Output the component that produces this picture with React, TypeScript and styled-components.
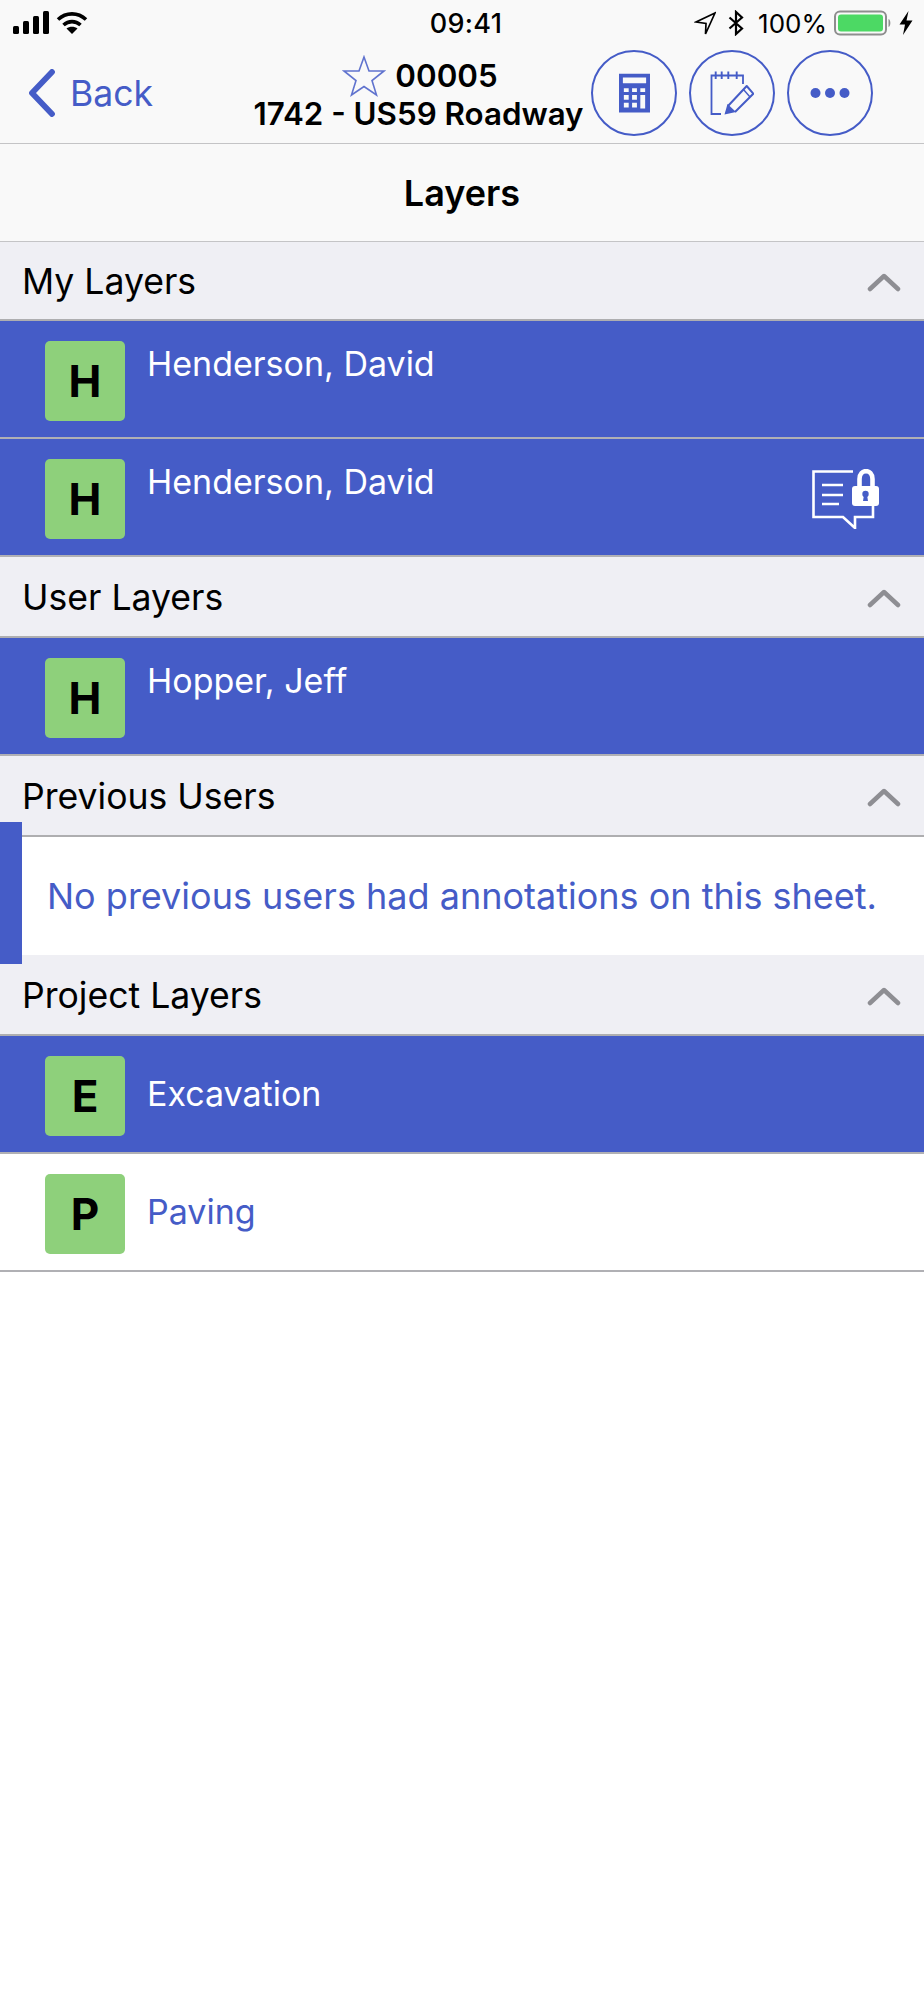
import React from 'react'
import styled, { createGlobalStyle } from 'styled-components'

const BLUE = '#455cc7'

const GlobalStyle = createGlobalStyle`
  html, body {
    margin: 0;
    padding: 0;
    background: #fff;
    font-family: Inter, "Noto Sans", "Liberation Sans", sans-serif;
  }
`

const Page = styled.div`
  position: relative;
  width: 924px;
  height: 2000px;
  background: #fff;
  overflow: hidden;
`

const TopBar = styled.header`
  height: 143px;
  background: #f9f9f9;
  border-bottom: 1px solid #c4c4c6;
  display: flex;
  flex-direction: column;
`

const StatusBar = styled.div`
  height: 46px;
  display: flex;
  align-items: center;
  justify-content: space-between;
  padding: 0 11px 0 13px;
  position: relative;
  font-size: 26px;
  color: #000;
`

const StatusGroup = styled.div`
  position: relative;
  display: flex;
  align-items: center;
  gap: 7px;
`

const StatusIcons = styled.div`
  display: flex;
  align-items: center;
  gap: 12px;
  margin-right: 7px;
`

const Clock = styled.div`
  position: absolute;
  left: 8px;
  right: 0;
  text-align: center;
  font-size: 27px;
  font-weight: 500;
  letter-spacing: 0.3px;
`

const NavRow = styled.div`
  flex: 1;
  display: flex;
  align-items: center;
  padding-bottom: 3px;
`

const BackLink = styled.div`
  width: 254px;
  padding-left: 29px;
  box-sizing: border-box;
  display: flex;
  align-items: center;
  gap: 15px;
  color: ${BLUE};
  font-size: 35.6px;
`

const NavTitle = styled.div`
  width: 329px;
  margin-bottom: -3px;
  display: flex;
  flex-direction: column;
  align-items: center;
  font-size: 31.3px;
  font-weight: 600;
  line-height: 38px;
  color: #000;
  white-space: nowrap;
`

const TitleTop = styled.div`
  height: 38px;
  display: flex;
  align-items: center;
  gap: 9px;
  margin-left: 3px;
`

const NavActions = styled.div`
  display: flex;
  gap: 12px;
  margin-left: 8px;
`

const CircleButton = styled.div`
  width: 86px;
  height: 86px;
  box-sizing: border-box;
  border: 2px solid ${BLUE};
  border-radius: 50%;
  display: flex;
  align-items: center;
  justify-content: center;
`

const TitleBar = styled.div`
  height: 97px;
  background: #f9f9f9;
  border-bottom: 1px solid #c4c4c6;
  display: flex;
  align-items: center;
  justify-content: center;
  font-size: 36px;
  font-weight: 600;
  color: #000;
`

const SectionHeader = styled.div<{ $first?: boolean }>`
  height: ${(p) => (p.$first ? '79px' : '81px')};
  box-sizing: border-box;
  background: #efeff4;
  border-bottom: 2px solid #aeaeb0;
  padding: 2px 23px 0 22px;
  display: flex;
  align-items: center;
  justify-content: space-between;
  font-size: 35.6px;
  color: #000;
`

const Row = styled.div<{ $selected?: boolean }>`
  height: 118px;
  box-sizing: border-box;
  border-bottom: 2px solid #b0b0b4;
  background: ${(p) => (p.$selected ? BLUE : '#fff')};
  color: ${(p) => (p.$selected ? '#fff' : BLUE)};
  padding: 4px 45px 0;
  display: flex;
  align-items: center;
  font-size: 34px;
`

const Badge = styled.div`
  width: 80px;
  height: 80px;
  flex: none;
  border-radius: 5px;
  background: #8ed07b;
  color: #000;
  font-size: 44px;
  font-weight: 700;
  display: flex;
  align-items: center;
  justify-content: center;
`

const RowLabel = styled.div<{ $top?: boolean }>`
  flex: 1;
  margin-left: 22px;
  margin-bottom: ${(p) => (p.$top ? '0' : '5px')};
  align-self: ${(p) => (p.$top ? 'flex-start' : 'center')};
  padding-top: ${(p) => (p.$top ? '18px' : '0')};
`

const EmptyMessage = styled.div`
  height: 118px;
  padding-left: 47px;
  display: flex;
  align-items: center;
  color: ${BLUE};
  font-size: 36px;
  background: #fff;
  white-space: nowrap;
`

// selection tab that sits over the header and message
const SideTab = styled.div`
  position: absolute;
  left: 0;
  top: 822px;
  width: 22px;
  height: 142px;
  background: ${BLUE};
`

const Chevron = () => (
  <svg width="34" height="20" viewBox="0 0 34 20" fill="none">
    <path d="M3 17 L17 4 L31 17" stroke="#8e8e93" strokeWidth="4.5" strokeLinecap="round" strokeLinejoin="round" />
  </svg>
)

const Signal = () => (
  <svg width="36" height="24" viewBox="0 0 36 24">
    <rect x="0" y="15" width="6" height="8" rx="1.5" fill="#000" />
    <rect x="10" y="10" width="6" height="13" rx="1.5" fill="#000" />
    <rect x="20" y="5" width="6" height="18" rx="1.5" fill="#000" />
    <rect x="30" y="0" width="6" height="23" rx="1.5" fill="#000" />
  </svg>
)

const Wifi = () => (
  <svg width="32" height="24" viewBox="0 0 32 24" fill="none">
    <path d="M2 8.5 C10 1 22 1 30 8.5" stroke="#000" strokeWidth="3.6" />
    <path d="M7.5 14 C12.5 9.5 19.5 9.5 24.5 14" stroke="#000" strokeWidth="3.6" />
    <path d="M16 23 L10.5 17.5 C13.5 15.2 18.5 15.2 21.5 17.5 Z" fill="#000" />
  </svg>
)

const LocationArrow = () => (
  <svg width="22" height="24" viewBox="0 0 22 24" fill="none">
    <path d="M21 2 L2 11 L12 12.5 L11.5 23 Z" stroke="#000" strokeWidth="1.7" strokeLinejoin="miter" />
  </svg>
)

const Bluetooth = () => (
  <svg width="16" height="26" viewBox="0 0 16 26" fill="none">
    <path d="M1.5 7.5 L14 18.5 L8 24 V2 L14 7.5 L1.5 18.5" stroke="#000" strokeWidth="2.2" />
  </svg>
)

const Battery = () => (
  <svg width="58" height="26" viewBox="0 0 58 26">
    <rect x="1" y="1.5" width="51" height="23" rx="5" fill="none" stroke="#8e8e8e" strokeWidth="2" />
    <rect x="4" y="4.5" width="45" height="17" rx="3" fill="#4cd964" />
    <path d="M54.5 9 C57 10 57 16 54.5 17 Z" fill="#8e8e8e" />
  </svg>
)

const Bolt = () => (
  <svg width="14" height="24" viewBox="0 0 14 24">
    <path d="M9.5 0 L0.5 13.5 H6 L4 24 L13.5 9.5 H7.5 Z" fill="#000" />
  </svg>
)

const BackChevron = () => (
  <svg width="26" height="48" viewBox="0 0 26 48" fill="none">
    <path d="M23 3 L3 24 L23 45" stroke={BLUE} strokeWidth="5.8" strokeLinecap="round" strokeLinejoin="round" />
  </svg>
)

const Star = () => (
  <svg width="44" height="42" viewBox="0 0 44 42" fill="none">
    <path
      d="M22 2 L27 16 L42 16 L30 25.5 L34.5 40 L22 31.5 L9.5 40 L14 25.5 L2 16 L17 16 Z"
      stroke={BLUE}
      strokeWidth="1.6"
      strokeLinejoin="miter"
      opacity="0.85"
    />
  </svg>
)

const Calculator = () => (
  <svg width="31" height="40" viewBox="0 0 32 40">
    <path
      fillRule="evenodd"
      fill={BLUE}
      d="M0 0 H32 V40 H0 Z M4 4 V10 H28 V4 Z M5 15 V19 H10 V15 Z M13.5 15 V19 H18.5 V15 Z M22 15 V19 H27 V15 Z M5 22 V27 H10 V22 Z M13.5 22 V27 H18.5 V22 Z M22 22 V36 H27 V22 Z M5 30 V35 H10 V30 Z M13.5 30 V35 H18.5 V30 Z"
    />
  </svg>
)

const NotePad = () => (
  <svg width="44" height="44" viewBox="0 0 44 44" fill="none">
    <path d="M11 43 H1.5 V4.5 H33 V13" stroke={BLUE} strokeWidth="1.8" />
    <path d="M5.7 0.5 V8 M11.7 0.5 V8 M18.3 0.5 V8 M26.7 0.5 V8" stroke={BLUE} strokeWidth="1.9" />
    <path d="M18 35 L36.7 15 L43.3 22.7 L25 41" stroke={BLUE} strokeWidth="2" strokeLinejoin="round" />
    <path d="M33.5 18.5 L40 26" stroke={BLUE} strokeWidth="1.4" />
    <path d="M14.5 43.5 L17.5 33 L26 41 Z" fill={BLUE} />
  </svg>
)

const Dots = () => (
  <svg width="40" height="12" viewBox="0 0 40 12">
    <circle cx="5.5" cy="6" r="5" fill={BLUE} />
    <circle cx="20" cy="6" r="5" fill={BLUE} />
    <circle cx="34.5" cy="6" r="5" fill={BLUE} />
  </svg>
)

const NoteLock = () => (
  <svg width="67" height="60" viewBox="0 0 67 60" fill="none">
    <path d="M41 2.5 H1.5 V48 H31 L43 59 V48 H61 V37" stroke="#fff" strokeWidth="2.6" />
    <path d="M10 16 H31 M10 26 H31 M10 35 H27" stroke="#fff" strokeWidth="2.6" />
    <path d="M47.5 18 V10 C47.5 -0.5 60.5 -0.5 60.5 10 V18" stroke="#fff" strokeWidth="4.6" />
    <rect x="40" y="17" width="27" height="20" rx="3" fill="#fff" />
    <circle cx="53.5" cy="25" r="3.2" fill={BLUE} />
    <path d="M52 26 H55 L56 32 H51 Z" fill={BLUE} />
  </svg>
)

type LayerRow = { letter: string; name: string; selected: boolean; top: boolean; locked?: boolean }
type Section = { title: string; rows?: LayerRow[]; message?: string }

const sections: Section[] = [
  {
    title: 'My Layers',
    rows: [
      { letter: 'H', name: 'Henderson, David', selected: true, top: true },
      { letter: 'H', name: 'Henderson, David', selected: true, top: true, locked: true },
    ],
  },
  {
    title: 'User Layers',
    rows: [{ letter: 'H', name: 'Hopper, Jeff', selected: true, top: true }],
  },
  { title: 'Previous Users', message: 'No previous users had annotations on this sheet.' },
  {
    title: 'Project Layers',
    rows: [
      { letter: 'E', name: 'Excavation', selected: true, top: false },
      { letter: 'P', name: 'Paving', selected: false, top: false },
    ],
  },
]

const App: React.FC = () => {
  return (
    <Page>
      <GlobalStyle />
      <TopBar>
        <StatusBar>
          <StatusGroup>
            <Signal />
            <Wifi />
          </StatusGroup>
          <Clock>09:41</Clock>
          <StatusGroup>
            <StatusIcons>
              <LocationArrow />
              <Bluetooth />
            </StatusIcons>
            <span>100%</span>
            <Battery />
            <Bolt />
          </StatusGroup>
        </StatusBar>
        <NavRow>
          <BackLink>
            <BackChevron />
            Back
          </BackLink>
          <NavTitle>
            <TitleTop>
              <Star />
              00005
            </TitleTop>
            1742 - US59 Roadway
          </NavTitle>
          <NavActions>
            <CircleButton>
              <Calculator />
            </CircleButton>
            <CircleButton>
              <NotePad />
            </CircleButton>
            <CircleButton>
              <Dots />
            </CircleButton>
          </NavActions>
        </NavRow>
      </TopBar>
      <TitleBar>Layers</TitleBar>
      {sections.map((section, index) => (
        <section key={section.title}>
          <SectionHeader $first={index === 0}>
            {section.title}
            <Chevron />
          </SectionHeader>
          {section.rows?.map((row, i) => (
            <Row key={i} $selected={row.selected}>
              <Badge>{row.letter}</Badge>
              <RowLabel $top={row.top}>{row.name}</RowLabel>
              {row.locked && <NoteLock />}
            </Row>
          ))}
          {section.message && <EmptyMessage>{section.message}</EmptyMessage>}
        </section>
      ))}
      <SideTab />
    </Page>
  )
}

export default App
